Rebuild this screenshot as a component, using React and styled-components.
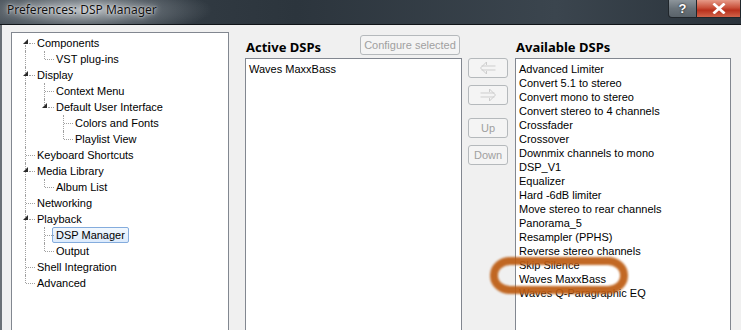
import React from 'react';
import styled, { createGlobalStyle, css } from 'styled-components';

const GlobalStyle = createGlobalStyle`
  *, *::before, *::after {
    box-sizing: border-box;
  }
  body {
    margin: 0;
    background: #1f262c;
    font-family: "Liberation Sans", Arial, sans-serif;
  }
`;

const treeItems = [
  { label: 'Components', level: 0, expanded: true },
  { label: 'VST plug-ins', level: 1, last: true },
  { label: 'Display', level: 0, expanded: true },
  { label: 'Context Menu', level: 1 },
  { label: 'Default User Interface', level: 1, expanded: true, last: true },
  { label: 'Colors and Fonts', level: 2 },
  { label: 'Playlist View', level: 2, last: true },
  { label: 'Keyboard Shortcuts', level: 0 },
  { label: 'Media Library', level: 0, expanded: true },
  { label: 'Album List', level: 1, last: true },
  { label: 'Networking', level: 0 },
  { label: 'Playback', level: 0, expanded: true },
  { label: 'DSP Manager', level: 1, selected: true },
  { label: 'Output', level: 1, last: true },
  { label: 'Shell Integration', level: 0 },
  { label: 'Advanced', level: 0, last: true },
];

const available = [
  'Advanced Limiter',
  'Convert 5.1 to stereo',
  'Convert mono to stereo',
  'Convert stereo to 4 channels',
  'Crossfader',
  'Crossover',
  'Downmix channels to mono',
  'DSP_V1',
  'Equalizer',
  'Hard -6dB limiter',
  'Move stereo to rear channels',
  'Panorama_5',
  'Resampler (PPHS)',
  'Reverse stereo channels',
  'Skip Silence',
  'Waves MaxxBass',
  'Waves Q-Paragraphic EQ',
];

// work out which ancestor levels still have siblings below
function withGuides(items) {
  const open = [];
  return items.map((item, i) => {
    open.length = item.level;
    const guides = open.slice();
    open[item.level] = !item.last;
    return { ...item, guides, first: i === 0 };
  });
}

function App() {
  const rows = withGuides(treeItems);

  return (
    <>
      <GlobalStyle />
      <Window>
        <TitleBar>
          <Title>Preferences: DSP Manager</Title>
          <Controls>
            <HelpButton>?</HelpButton>
            <CloseButton>
              <svg width="14" height="11" viewBox="0 0 14 11">
                <path d="M2.5 1.5 L11.5 9.5 M11.5 1.5 L2.5 9.5" stroke="#fff" strokeWidth="2.8" strokeLinecap="square" />
              </svg>
            </CloseButton>
          </Controls>
        </TitleBar>
        <Body>
          <Tree>
            {rows.map((row) => (
              <TreeRow key={row.label}>
                {row.guides.map((on, i) => (
                  <Guide key={i} $through={on} />
                ))}
                <Guide $own={row.last ? 'half' : 'full'} $first={row.first} $expanded={row.expanded}>
                  {row.expanded && <Expander />}
                </Guide>
                <TreeLabel $selected={row.selected}>{row.label}</TreeLabel>
              </TreeRow>
            ))}
          </Tree>

          <Column>
            <ColumnHead>
              <Heading>Active DSPs</Heading>
              <SmallButton disabled>Configure selected</SmallButton>
            </ColumnHead>
            <ListBox>
              <ListItem>Waves MaxxBass</ListItem>
            </ListBox>
          </Column>

          <ButtonStack>
            <MoveButton disabled>
              <svg width="20" height="14" viewBox="0 0 20 14">
                <path d="M8.5 1 L2.5 7 L8.5 13 M3.5 5 H17.5 M3.5 9 H17.5 M8.5 1 V4 M8.5 10 V13" fill="none" stroke="#cdcdcd" strokeWidth="1" />
              </svg>
            </MoveButton>
            <MoveButton disabled>
              <svg width="20" height="14" viewBox="0 0 20 14">
                <path d="M11.5 1 L17.5 7 L11.5 13 M16.5 5 H2.5 M16.5 9 H2.5 M11.5 1 V4 M11.5 10 V13" fill="none" stroke="#cdcdcd" strokeWidth="1" />
              </svg>
            </MoveButton>
            <MoveButton disabled $gapTop>Up</MoveButton>
            <MoveButton disabled>Down</MoveButton>
          </ButtonStack>

          <Column $wide>
            <ColumnHead>
              <Heading>Available DSPs</Heading>
            </ColumnHead>
            <ListBox>
              {available.map((name) => (
                <ListItem key={name}>{name}</ListItem>
              ))}
              <Circled />
            </ListBox>
          </Column>
        </Body>
      </Window>
    </>
  );
}

const Window = styled.div`
  width: 741px;
  height: 330px;
  overflow: hidden;
  display: flex;
  flex-direction: column;
`;

const TitleBar = styled.div`
  height: 25px;
  flex: none;
  display: flex;
  align-items: flex-start;
  border-bottom: 1px solid #101418;
  background:
    radial-gradient(ellipse 130px 26px at 82px 10px, rgba(195, 200, 204, 0.9), rgba(135, 143, 150, 0.45) 60%, rgba(0, 0, 0, 0) 100%),
    linear-gradient(90deg, #3a434b 0%, #2c353d 40%, #3b454e 75%, #2a333b 100%);
`;

const Title = styled.div`
  padding: 1px 0 0 7px;
  font-family: "Noto Sans", "Liberation Sans", sans-serif;
  font-size: 12px;
  line-height: 18px;
  color: #111;
  text-shadow: 0 0 6px rgba(255, 255, 255, 0.9), 0 0 2px rgba(255, 255, 255, 0.8);
`;

const Controls = styled.div`
  margin-left: auto;
  display: flex;
  height: 18px;
`;

const WinButton = styled.div`
  height: 18px;
  display: flex;
  align-items: center;
  justify-content: center;
  border: 1px solid #20262b;
  border-top: none;
  color: #fff;
  font-family: "Liberation Sans", sans-serif;
  font-weight: bold;
  font-size: 13px;
`;

const HelpButton = styled(WinButton)`
  width: 29px;
  border-radius: 0 0 0 4px;
  background: linear-gradient(180deg, #8d959b 0%, #6a737a 50%, #5a636a 100%);
  text-shadow: 0 0 2px #000;
`;

const CloseButton = styled(WinButton)`
  width: 44px;
  border-left: none;
  background: linear-gradient(180deg, #e69a88 0%, #c9513b 45%, #b8301c 60%, #d0634a 100%);
`;

const Body = styled.div`
  flex: 1;
  display: flex;
  align-items: stretch;
  background: #f0f0f0;
  border-left: 2px solid #6a7076;
  padding: 7px 0 0 9px;
`;

const Tree = styled.div`
  width: 218px;
  flex: none;
  margin-right: 16px;
  background: #fff;
  border: 1px solid #828790;
  border-bottom: none;
  padding: 2px 0 0 6px;
  font-size: 11px;
  color: #000;
`;

const TreeRow = styled.div`
  display: flex;
  height: 16px;
  align-items: center;
`;

const dotted = '1px dotted #a0a0a0';

const Guide = styled.span`
  position: relative;
  width: 19px;
  height: 16px;
  flex: none;

  ${(p) => p.$through && css`
    &::before {
      content: '';
      position: absolute;
      left: 7px;
      top: 0;
      bottom: 0;
      border-left: ${dotted};
    }
  `}

  ${(p) => p.$own && css`
    &::before {
      content: '';
      position: absolute;
      left: 7px;
      top: ${p.$first ? '10px' : '0'};
      height: ${p.$own === 'half' ? '8px' : 'auto'};
      bottom: ${p.$own === 'half' ? 'auto' : '0'};
      border-left: ${dotted};
    }
    &::after {
      content: '';
      position: absolute;
      left: ${p.$expanded ? '11px' : '8px'};
      top: 8px;
      width: ${p.$expanded ? '6px' : '9px'};
      border-top: ${dotted};
    }
  `}
`;

const Expander = styled.span`
  position: absolute;
  z-index: 1;
  left: 5px;
  top: 4px;
  width: 0;
  height: 0;
  border-right: 5px solid #2a2a2a;
  border-top: 5px solid transparent;
`;

const TreeLabel = styled.span`
  margin-left: -4px;
  padding: 0 3px;
  height: 16px;
  line-height: 14px;
  white-space: nowrap;
  border: 1px solid transparent;
  border-radius: 2px;

  ${(p) => p.$selected && css`
    border-color: #84acdd;
    background: linear-gradient(180deg, #f2f8fe 0%, #dbeafc 100%);
  `}
`;

const Column = styled.div`
  width: ${(p) => (p.$wide ? '216px' : '217px')};
  flex: none;
  display: flex;
  flex-direction: column;
`;

const ColumnHead = styled.div`
  height: 26px;
  flex: none;
  display: flex;
  align-items: center;
  justify-content: space-between;
  padding: 0 2px 0 1px;
`;

const Heading = styled.div`
  font-family: "Noto Sans", "Liberation Sans", sans-serif;
  font-weight: bold;
  font-size: 13px;
  color: #000;
  padding-top: 3px;
`;

const SmallButton = styled.button`
  height: 20px;
  width: 100px;
  padding: 0;
  font-family: "Liberation Sans", sans-serif;
  font-size: 11px;
  color: #a0a0a0;
  background: #f4f4f4;
  border: 1px solid #b5b9bc;
  border-radius: 3px;
`;

const ListBox = styled.div`
  position: relative;
  flex: 1;
  background: #fff;
  border: 1px solid #828790;
  border-bottom: none;
  padding: 3px 0 0 3px;
`;

const ListItem = styled.div`
  height: 14px;
  line-height: 14px;
  font-size: 11px;
  color: #000;
  white-space: nowrap;
`;

const ButtonStack = styled.div`
  width: 40px;
  flex: none;
  margin: 26px 7px 0 6px;
  display: flex;
  flex-direction: column;
  gap: 7px;
`;

const MoveButton = styled.button`
  height: 20px;
  padding: 0;
  display: flex;
  align-items: center;
  justify-content: center;
  margin-top: ${(p) => (p.$gapTop ? '6px' : '0')};
  font-family: "Liberation Sans", sans-serif;
  font-size: 11px;
  color: #a0a0a0;
  background: #f4f4f4;
  border: 1px solid #b5b9bc;
  border-radius: 3px;
`;

// hand-drawn highlight marking around an entry
const Circled = styled.div`
  position: absolute;
  left: -26px;
  top: 198px;
  width: 138px;
  height: 37px;
  border: 8px solid #bd5c12;
  border-radius: 20px / 18px;
  filter: blur(1.3px);
  opacity: 0.92;
  pointer-events: none;
`;

export default App;
